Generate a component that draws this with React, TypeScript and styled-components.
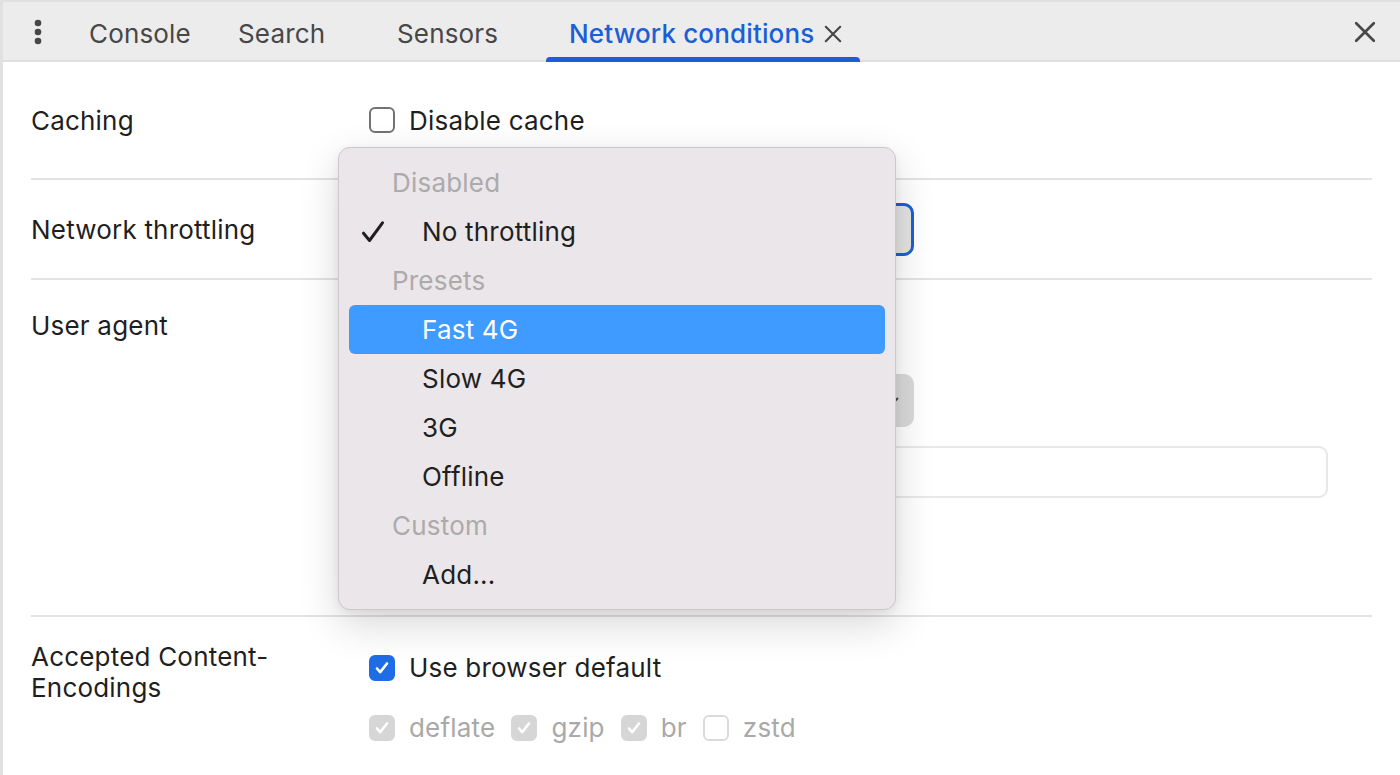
import React from 'react';
import styled, { createGlobalStyle } from 'styled-components';

const GlobalStyle = createGlobalStyle`
  html, body {
    margin: 0;
    padding: 0;
    background: #ffffff;
  }
  body {
    font-family: Inter, 'Noto Sans', 'Liberation Sans', sans-serif;
    -webkit-font-smoothing: antialiased;
  }
  * { box-sizing: border-box; }
`;

const Window = styled.div`
  position: relative;
  width: 1400px;
  height: 775px;
  overflow: hidden;
  background: #ffffff;
  border-left: 3px solid #e1e1e1;
  border-top: 2px solid #e1e1e1;
  display: flex;
  flex-direction: column;
`;

/* ---------- tab strip ---------- */

const TabBar = styled.div`
  display: flex;
  flex-direction: row;
  align-items: stretch;
  height: 60px;
  flex-shrink: 0;
  background: #ececec;
  border-bottom: 2px solid #e0e0e0;
`;

const IconButton = styled.div`
  display: flex;
  align-items: center;
  justify-content: center;
  width: 70px;
  padding-top: 2px;
  color: #474747;
`;

const CloseAll = styled(IconButton)`
  margin-left: auto;
`;

const Tab = styled.div<{ $width?: number; $active?: boolean }>`
  position: relative;
  display: flex;
  align-items: center;
  gap: 10px;
  padding: 5px ${(p) => (p.$active ? 18 : 0)}px 0 ${(p) => (p.$active ? 23 : 16)}px;
  width: ${(p) => (p.$width ? `${p.$width}px` : 'auto')};
  font-size: 26px;
  letter-spacing: 0.15px;
  font-weight: ${(p) => (p.$active ? 500 : 400)};
  color: ${(p) => (p.$active ? '#1b5fd6' : '#474747')};
  white-space: nowrap;

  ${(p) =>
    p.$active &&
    `
    &::after {
      content: '';
      position: absolute;
      left: 0;
      right: 0;
      bottom: -2px;
      height: 5px;
      border-radius: 4px 4px 0 0;
      background: #1b5fd6;
    }
  `}
`;

const TabClose = styled.span`
  display: flex;
  color: #474747;
`;

/* ---------- settings ---------- */

const Content = styled.div`
  display: flex;
  flex-direction: column;
  padding: 0 28px;
  color: #1f1f1f;
  font-size: 26px;
  letter-spacing: 0.2px;
  line-height: 31px;
`;

const Row = styled.div<{ $height: number; $align?: string; $padTop?: number }>`
  display: flex;
  flex-direction: row;
  align-items: ${(p) => p.$align || 'center'};
  height: ${(p) => p.$height}px;
  padding-top: ${(p) => p.$padTop || 0}px;
  border-bottom: 2px solid #e3e3e3;

  &:last-child {
    border-bottom: none;
  }
`;

const Label = styled.div`
  width: 338px;
  flex-shrink: 0;
`;

const Controls = styled.div<{ $padTop?: number }>`
  display: flex;
  flex-direction: column;
  flex: 1;
  padding-top: ${(p) => p.$padTop || 0}px;
`;

const CheckRow = styled.label<{ $gap?: number; $top?: number }>`
  display: flex;
  align-items: center;
  gap: ${(p) => p.$gap ?? 0}px;
  height: 31px;
  margin-top: ${(p) => p.$top || 0}px;
`;

const CheckOption = styled.span<{ $disabled?: boolean }>`
  display: flex;
  align-items: center;
  gap: 14px;
  color: ${(p) => (p.$disabled ? '#a9a9a9' : '#1f1f1f')};
`;

const Box = styled.span<{ $checked?: boolean; $disabled?: boolean }>`
  display: flex;
  align-items: center;
  justify-content: center;
  width: 26px;
  height: 26px;
  border-radius: 6px;
  flex-shrink: 0;
  border: 2px solid
    ${(p) =>
      p.$checked ? (p.$disabled ? '#d6d6d6' : '#1e6de6') : p.$disabled ? '#dadada' : '#727272'};
  background: ${(p) =>
    p.$checked ? (p.$disabled ? '#d6d6d6' : '#1e6de6') : '#ffffff'};
`;

const SelectBox = styled.div<{ $focused?: boolean; $top: number }>`
  display: flex;
  align-items: center;
  justify-content: flex-end;
  margin-top: ${(p) => p.$top}px;
  width: 545px;
  height: 53px;
  padding: 0 14px 0 16px;
  border-radius: 10px;
  background: ${(p) => (p.$focused ? '#e4e4e4' : '#dadada')};
  border: ${(p) => (p.$focused ? '3px solid #1b5fd6' : 'none')};
`;

const TextInput = styled.div`
  margin-top: 19px;
  width: 959px;
  height: 52px;
  border: 2px solid #e8e8e8;
  border-radius: 9px;
  background: #ffffff;
`;

/* ---------- dropdown menu (overlay) ---------- */

const Menu = styled.div`
  position: absolute;
  left: 335px;
  top: 145px;
  width: 558px;
  padding: 10px;
  background: #ebe6e9;
  border: 1px solid #cbc7ca;
  border-radius: 12px;
  box-shadow: 0 14px 40px rgba(0, 0, 0, 0.16), 0 2px 8px rgba(0, 0, 0, 0.06);
  font-size: 26px;
  letter-spacing: 0.2px;
  z-index: 10;
`;

const MenuHeader = styled.div`
  display: flex;
  align-items: center;
  height: 49px;
  padding-left: 43px;
  color: #acaaab;
`;

const MenuItem = styled.div<{ $highlight?: boolean }>`
  display: flex;
  align-items: center;
  height: 49px;
  padding-left: 12px;
  border-radius: 6px;
  background: ${(p) => (p.$highlight ? '#3f9bff' : 'transparent')};
  color: ${(p) => (p.$highlight ? '#ffffff' : '#1f1f1f')};
`;

const CheckSlot = styled.span`
  display: flex;
  align-items: center;
  width: 61px;
  color: #1f1f1f;
`;

/* ---------- icons ---------- */

const Tick = ({ color = '#ffffff', size = 18 }: { color?: string; size?: number }) => (
  <svg width={size} height={size} viewBox="0 0 18 18" fill="none">
    <path d="M4 9.5l3.2 3.6L14 4.5" stroke={color} strokeWidth="2.6" strokeLinecap="round" strokeLinejoin="round" />
  </svg>
);

const MenuCheck = () => (
  <svg width="24" height="24" viewBox="0 0 24 24" fill="none">
    <path d="M2.5 13.2l6 7.3L21.5 2.8" stroke="#1f1f1f" strokeWidth="3" strokeLinecap="round" strokeLinejoin="round" />
  </svg>
);

const Dots = () => (
  <svg width="8" height="26" viewBox="0 0 8 26">
    <circle cx="4" cy="4" r="3.3" fill="#474747" />
    <circle cx="4" cy="13" r="3.3" fill="#474747" />
    <circle cx="4" cy="22" r="3.3" fill="#474747" />
  </svg>
);

const Cross = ({ size }: { size: number }) => (
  <svg width={size} height={size} viewBox="0 0 20 20">
    <path d="M2 2L18 18M18 2L2 18" stroke="#474747" strokeWidth="2.4" strokeLinecap="round" />
  </svg>
);

const Chevron = () => (
  <svg width="16" height="10" viewBox="0 0 16 10">
    <path d="M2 2l6 6 6-6" stroke="#474747" strokeWidth="2" fill="none" />
  </svg>
);

const throttlingMenu = [
  { type: 'header', text: 'Disabled' },
  { type: 'item', text: 'No throttling', checked: true },
  { type: 'header', text: 'Presets' },
  { type: 'item', text: 'Fast 4G', highlight: true },
  { type: 'item', text: 'Slow 4G' },
  { type: 'item', text: '3G' },
  { type: 'item', text: 'Offline' },
  { type: 'header', text: 'Custom' },
  { type: 'item', text: 'Add...' },
];

const encodings = [
  { name: 'deflate', checked: true },
  { name: 'gzip', checked: true },
  { name: 'br', checked: true },
  { name: 'zstd', checked: false },
];

const App = () => {
  return (
    <Window>
      <GlobalStyle />
      <TabBar>
        <IconButton>
          <Dots />
        </IconButton>
        <Tab $width={149}>Console</Tab>
        <Tab $width={159}>Search</Tab>
        <Tab $width={165}>Sensors</Tab>
        <Tab $active>
          Network conditions
          <TabClose>
            <Cross size={18} />
          </TabClose>
        </Tab>
        <CloseAll>
          <Cross size={22} />
        </CloseAll>
      </TabBar>

      <Content>
        <Row $height={118}>
          <Label>Caching</Label>
          <CheckRow $gap={14}>
            <Box />
            Disable cache
          </CheckRow>
        </Row>

        <Row $height={100}>
          <Label>Network throttling</Label>
          <Controls>
            {/* value is covered by the open menu */}
            <SelectBox $focused $top={0}>
              <Chevron />
            </SelectBox>
          </Controls>
        </Row>

        <Row $height={337} $align="flex-start" $padTop={30}>
          <Label>User agent</Label>
          <Controls>
            <CheckRow $gap={14}>
              <Box $checked>
                <Tick />
              </Box>
            </CheckRow>
            <SelectBox $top={33}>
              <Chevron />
            </SelectBox>
            <TextInput />
          </Controls>
        </Row>

        <Row $height={158} $align="flex-start" $padTop={24}>
          <Label>
            Accepted Content-
            <br />
            Encodings
          </Label>
          <Controls $padTop={11}>
            <CheckRow $gap={14}>
              <Box $checked>
                <Tick />
              </Box>
              Use browser default
            </CheckRow>
            <CheckRow $gap={16} $top={29}>
              {encodings.map((e) => (
                <CheckOption key={e.name} $disabled>
                  <Box $checked={e.checked} $disabled>
                    {e.checked && <Tick />}
                  </Box>
                  {e.name}
                </CheckOption>
              ))}
            </CheckRow>
          </Controls>
        </Row>
      </Content>

      <Menu>
        {throttlingMenu.map((m) =>
          m.type === 'header' ? (
            <MenuHeader key={m.text}>{m.text}</MenuHeader>
          ) : (
            <MenuItem key={m.text} $highlight={m.highlight}>
              <CheckSlot>{m.checked && <MenuCheck />}</CheckSlot>
              {m.text}
            </MenuItem>
          )
        )}
      </Menu>
    </Window>
  );
};

export default App;
